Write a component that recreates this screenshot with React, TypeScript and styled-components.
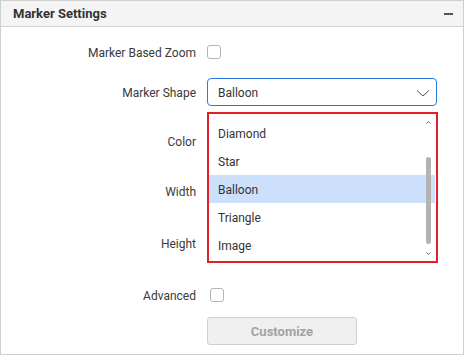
import React from "react";
import styled, { createGlobalStyle } from "styled-components";

const GlobalStyle = createGlobalStyle`
	body {
		margin: 0;
		background: #fff;
		font-family: Roboto, "Liberation Sans", sans-serif;
	}
`;

const Panel = styled.div`
	width: 464px;
	height: 355px;
	box-sizing: border-box;
	border: 1px solid #cfcfcf;
	background: #fff;
	position: relative;
	overflow: hidden;
`;

const Header = styled.div`
	height: 25px;
	display: flex;
	align-items: center;
	justify-content: space-between;
	padding: 0 10px 0 12px;
	background: #f4f4f4;
	border-bottom: 1px solid #d3d3d3;
`;

const Title = styled.div`
	font-size: 13px;
	font-weight: 700;
	color: #333;
`;

const Collapse = styled.div`
	width: 9px;
	height: 2px;
	background: #555;
	margin-top: 1px;
`;

const Body = styled.div`
	padding-top: 5px;
	display: flex;
	flex-direction: column;
`;

const Row = styled.div<{ h: number }>`
	height: ${(p) => p.h}px;
	display: grid;
	grid-template-columns: 195px 1fr;
	column-gap: 11px;
	align-items: center;
`;

const Label = styled.div`
	text-align: right;
	font-size: 12px;
	color: #3a3a3a;
	padding-top: 2px;
`;

const Checkbox = styled.div<{ offset?: number }>`
	width: 12px;
	height: 12px;
	border: 1px solid #b5b5b5;
	border-radius: 3px;
	margin-left: ${(p) => p.offset || 0}px;
`;

const Select = styled.div`
	width: 230px;
	height: 28px;
	box-sizing: border-box;
	border: 1px solid #2a7ae2;
	border-radius: 4px;
	display: flex;
	align-items: center;
	justify-content: space-between;
	padding: 1px 4px 0 10px;
	font-size: 12px;
	color: #333;
`;

const Button = styled.div`
	width: 150px;
	height: 28px;
	box-sizing: border-box;
	border: 1px solid #d0d0d0;
	border-radius: 3px;
	background: #f0f0f0;
	color: #a3a3a3;
	font-size: 13px;
	font-weight: 700;
	display: flex;
	align-items: center;
	justify-content: center;
`;

const Popup = styled.div`
	position: absolute;
	left: 206px;
	top: 111px;
	width: 231px;
	height: 151px;
	box-sizing: border-box;
	border: 2px solid #e3202a;
	background: #fff;
	padding-top: 5px;
`;

const Item = styled.div<{ active?: boolean }>`
	height: 28px;
	box-sizing: border-box;
	display: flex;
	align-items: center;
	padding: 2px 0 0 9px;
	margin-right: 1px;
	font-size: 12px;
	color: #333;
	background: ${(p) => (p.active ? "#cde0fb" : "transparent")};
`;

const Thumb = styled.div`
	position: absolute;
	right: 5px;
	top: 43px;
	width: 5px;
	height: 87px;
	border-radius: 3px;
	background: #b3b3b3;
`;

const Arrow = styled.div<{ top: number }>`
	position: absolute;
	right: 4px;
	top: ${(p) => p.top}px;
	width: 7px;
	height: 5px;
	display: flex;
`;

const shapes = ["Diamond", "Star", "Balloon", "Triangle", "Image"];

function Chevron() {
	return (
		<svg width="18" height="16" viewBox="0 0 18 16">
			<path d="M3 5.5 L9 11 L15 5.5" fill="none" stroke="#555" strokeWidth="1" />
		</svg>
	);
}

function Caret({ up }: { up?: boolean }) {
	return (
		<svg width="7" height="5" viewBox="0 0 7 5">
			<path
				d={up ? "M1.5 3.5 L3.5 1.5 L5.5 3.5" : "M1.5 1.5 L3.5 3.5 L5.5 1.5"}
				fill="none"
				stroke="#666"
				strokeWidth="1"
			/>
		</svg>
	);
}

export default function App() {
	return (
		<>
			<GlobalStyle />
			<Panel>
				<Header>
					<Title>Marker Settings</Title>
					<Collapse />
				</Header>
				<Body>
					<Row h={40}>
						<Label>Marker Based Zoom</Label>
						<Checkbox />
					</Row>
					<Row h={40}>
						<Label>Marker Shape</Label>
						<Select>
							Balloon
							<Chevron />
						</Select>
					</Row>
					<Row h={58}>
						<Label>Color</Label>
						<div />
					</Row>
					<Row h={42}>
						<Label>Width</Label>
						<div />
					</Row>
					<Row h={62}>
						<Label>Height</Label>
						<div />
					</Row>
					<Row h={42}>
						<Label>Advanced</Label>
						<Checkbox offset={3} />
					</Row>
					<Row h={30}>
						<div />
						<Button>Customize</Button>
					</Row>
				</Body>
				<Popup>
					{shapes.map((s) => (
						<Item key={s} active={s === "Balloon"}>
							{s}
						</Item>
					))}
					<Arrow top={6}>
						<Caret up />
					</Arrow>
					<Arrow top={137}>
						<Caret />
					</Arrow>
					<Thumb />
				</Popup>
			</Panel>
		</>
	);
}
